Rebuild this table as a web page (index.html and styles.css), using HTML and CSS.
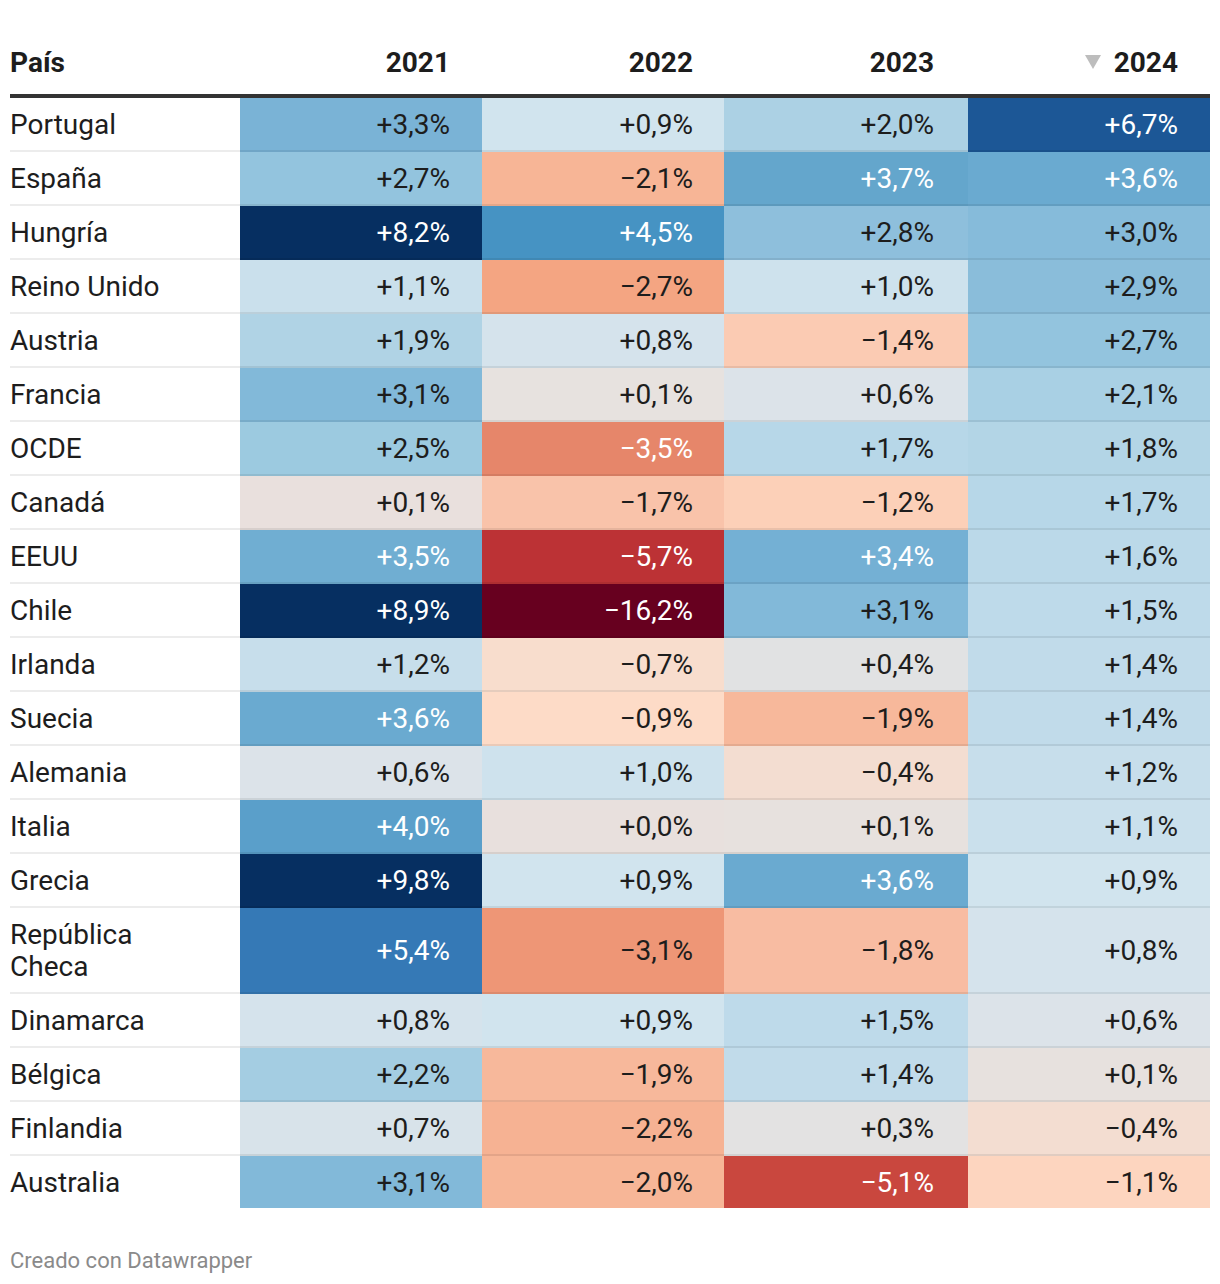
FILE: index.html
```html
<!DOCTYPE html>
<html lang="es">
<head>
<meta charset="utf-8">
<title>Tabla</title>
<link rel="stylesheet" href="styles.css">
</head>
<body>
<div class="chart">
<table class="tbl">
<colgroup>
<col class="c-country"><col class="c-y1"><col class="c-y2"><col class="c-y3"><col class="c-y4">
</colgroup>
<thead>
<tr>
<th class="h-country">País</th>
<th class="h-num">2021</th>
<th class="h-num">2022</th>
<th class="h-num">2023</th>
<th class="h-num"><span class="sort-arrow"></span>2024</th>
</tr>
</thead>
<tbody>
<tr><td class="country">Portugal</td><td class="v" style="background:#7ab3d6">+3,3%</td><td class="v" style="background:#d1e4ee">+0,9%</td><td class="v" style="background:#acd1e4">+2,0%</td><td class="v w" style="background:#1c5796">+6,7%</td></tr>
<tr><td class="country">España</td><td class="v" style="background:#93c4de">+2,7%</td><td class="v" style="background:#f7b596">−2,1%</td><td class="v w" style="background:#64a6cc">+3,7%</td><td class="v w" style="background:#6aaad0">+3,6%</td></tr>
<tr><td class="country">Hungría</td><td class="v w" style="background:#062f61">+8,2%</td><td class="v w" style="background:#4693c3">+4,5%</td><td class="v" style="background:#8ebfdc">+2,8%</td><td class="v" style="background:#86bbda">+3,0%</td></tr>
<tr><td class="country">Reino Unido</td><td class="v" style="background:#cae0ec">+1,1%</td><td class="v" style="background:#f4a582">−2,7%</td><td class="v" style="background:#cee2ed">+1,0%</td><td class="v" style="background:#8abdda">+2,9%</td></tr>
<tr><td class="country">Austria</td><td class="v" style="background:#b0d3e5">+1,9%</td><td class="v" style="background:#d5e3ec">+0,8%</td><td class="v" style="background:#fbcbb3">−1,4%</td><td class="v" style="background:#93c4de">+2,7%</td></tr>
<tr><td class="country">Francia</td><td class="v" style="background:#82b9d9">+3,1%</td><td class="v" style="background:#e7e2df">+0,1%</td><td class="v" style="background:#dce3e9">+0,6%</td><td class="v" style="background:#a9d0e4">+2,1%</td></tr>
<tr><td class="country">OCDE</td><td class="v" style="background:#9ccae0">+2,5%</td><td class="v w" style="background:#e6866a">−3,5%</td><td class="v" style="background:#b7d7e8">+1,7%</td><td class="v" style="background:#b3d5e6">+1,8%</td></tr>
<tr><td class="country">Canadá</td><td class="v" style="background:#e9e0dd">+0,1%</td><td class="v" style="background:#f9c3aa">−1,7%</td><td class="v" style="background:#fcd0b8">−1,2%</td><td class="v" style="background:#b7d7e8">+1,7%</td></tr>
<tr><td class="country">EEUU</td><td class="v w" style="background:#70aed2">+3,5%</td><td class="v w" style="background:#bc3235">−5,7%</td><td class="v w" style="background:#74b0d4">+3,4%</td><td class="v" style="background:#bbd9e9">+1,6%</td></tr>
<tr><td class="country">Chile</td><td class="v w" style="background:#062f61">+8,9%</td><td class="v w" style="background:#67001f">−16,2%</td><td class="v" style="background:#82b9d9">+3,1%</td><td class="v" style="background:#bedaea">+1,5%</td></tr>
<tr><td class="country">Irlanda</td><td class="v" style="background:#c7deeb">+1,2%</td><td class="v" style="background:#f8ddcd">−0,7%</td><td class="v" style="background:#e1e2e3">+0,4%</td><td class="v" style="background:#c1dbea">+1,4%</td></tr>
<tr><td class="country">Suecia</td><td class="v w" style="background:#6aaad0">+3,6%</td><td class="v" style="background:#fddbc7">−0,9%</td><td class="v" style="background:#f7b89b">−1,9%</td><td class="v" style="background:#c1dbea">+1,4%</td></tr>
<tr><td class="country">Alemania</td><td class="v" style="background:#dce3e9">+0,6%</td><td class="v" style="background:#cee2ed">+1,0%</td><td class="v" style="background:#f3ddd1">−0,4%</td><td class="v" style="background:#c7deeb">+1,2%</td></tr>
<tr><td class="country">Italia</td><td class="v w" style="background:#5a9fca">+4,0%</td><td class="v" style="background:#e8e0dd">+0,0%</td><td class="v" style="background:#e7e1de">+0,1%</td><td class="v" style="background:#cae0ec">+1,1%</td></tr>
<tr><td class="country">Grecia</td><td class="v w" style="background:#062f61">+9,8%</td><td class="v" style="background:#d1e4ee">+0,9%</td><td class="v w" style="background:#6aaad0">+3,6%</td><td class="v" style="background:#d1e4ee">+0,9%</td></tr>
<tr><td class="country">República Checa</td><td class="v w" style="background:#3579b6">+5,4%</td><td class="v" style="background:#ee9676">−3,1%</td><td class="v" style="background:#f8bca2">−1,8%</td><td class="v" style="background:#d5e3ec">+0,8%</td></tr>
<tr><td class="country">Dinamarca</td><td class="v" style="background:#d5e3ec">+0,8%</td><td class="v" style="background:#d1e4ee">+0,9%</td><td class="v" style="background:#bedaea">+1,5%</td><td class="v" style="background:#dce3e9">+0,6%</td></tr>
<tr><td class="country">Bélgica</td><td class="v" style="background:#a4cde2">+2,2%</td><td class="v" style="background:#f7b89b">−1,9%</td><td class="v" style="background:#c1dbea">+1,4%</td><td class="v" style="background:#e7e1de">+0,1%</td></tr>
<tr><td class="country">Finlandia</td><td class="v" style="background:#d8e3ea">+0,7%</td><td class="v" style="background:#f6b293">−2,2%</td><td class="v" style="background:#e3e2e2">+0,3%</td><td class="v" style="background:#f3ddd1">−0,4%</td></tr>
<tr><td class="country">Australia</td><td class="v" style="background:#82b9d9">+3,1%</td><td class="v" style="background:#f7b697">−2,0%</td><td class="v w" style="background:#c9473e">−5,1%</td><td class="v" style="background:#fdd5bf">−1,1%</td></tr>
</tbody>
</table>
<div class="footer">Creado con Datawrapper</div>
</div>
</body>
</html>
```
FILE: styles.css
```css
html, body {
  margin: 0;
  padding: 0;
  background: #ffffff;
}
.chart {
  padding: 40px 10px 0 10px;
  font-family: Roboto, "Liberation Sans", sans-serif;
  color: #1d1d1d;
}
.tbl {
  width: 1200px;
  border-collapse: separate;
  border-spacing: 0;
  table-layout: fixed;
  font-size: 28px;
  line-height: 32px;
}
.c-country { width: 230px; }
.c-y1 { width: 242px; }
.c-y2 { width: 242px; }
.c-y3 { width: 244px; }
.c-y4 { width: 242px; }
.tbl th {
  font-weight: 700;
  color: #1d1d1d;
  padding: 7px 32px 15px 0;
  border-bottom: 4px solid #333333;
  vertical-align: bottom;
}
.h-country { text-align: left; }
.h-num { text-align: right; }
.tbl th:nth-child(3) { padding-right: 31px; }
.tbl th:nth-child(4) { padding-right: 34px; }
.sort-arrow {
  display: inline-block;
  width: 0;
  height: 0;
  border-left: 8px solid transparent;
  border-right: 8px solid transparent;
  border-top: 14px solid #bdbdbd;
  margin-right: 13px;
  vertical-align: 3px;
}
.tbl td {
  padding: 11px 32px 9px 0;
  border-bottom: 2px solid rgba(0, 0, 0, 0.075);
  vertical-align: middle;
}
.tbl tbody tr:last-child td { border-bottom: none; }
.tbl td.country {
  text-align: left;
  padding-right: 30px;
}
.tbl td.v {
  text-align: right;
  color: #1d1d1d;
}
.tbl td:nth-child(3) { padding-right: 31px; }
.tbl td:nth-child(4) { padding-right: 34px; }
.tbl td.w { color: #ffffff; }
.footer {
  margin-top: 39px;
  font-size: 22px;
  line-height: 28px;
  color: #8a8a8a;
}
```
